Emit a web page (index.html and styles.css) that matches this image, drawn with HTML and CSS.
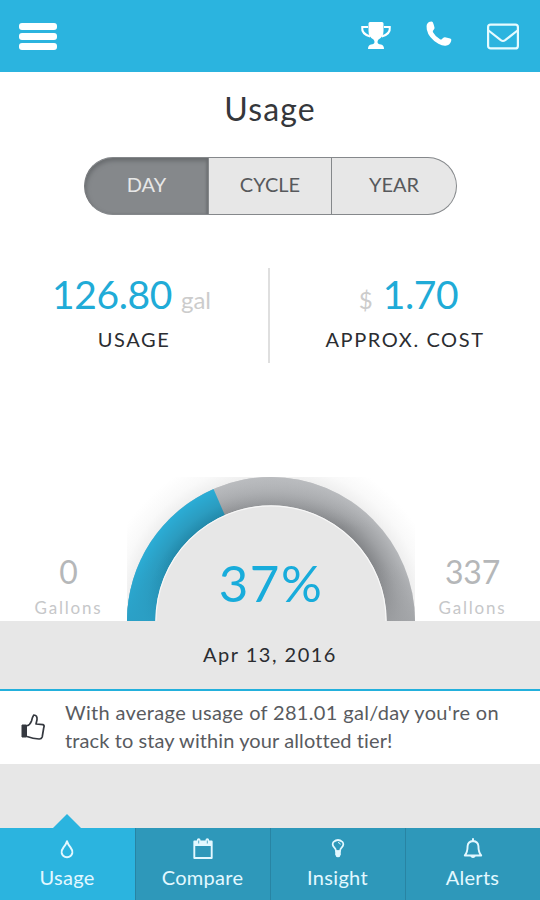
FILE: index.html
```html
<!DOCTYPE html>
<html lang="en">
<head>
    <meta charset="UTF-8">
    <meta name="viewport" content="width=device-width, initial-scale=1.0">
    <title>Usage</title>
    <link rel="stylesheet" href="styles.css">
</head>
<body>
    <header class="topbar">
        <div class="menu">
            <span></span>
            <span></span>
            <span></span>
        </div>
        <div class="actions">
            <svg class="trophy" width="32" height="29" viewBox="0 0 32 29">
                <path d="M8 6H2.200q-.8 7 8 9.500M24 6h5.800q.8 7-8 9.500" fill="none" stroke="#fff" stroke-width="2"/>
                <path d="M8.500 2.500Q8.500 1 10 1h12q1.500 0 1.500 1.500V10q0 6-5 8.500-1 1-1 2.500 0 2 3.500 2.500 3 .5 3 4.500H8q0-4 3-4.500 3.500-.5 3.500-2.500 0-1.500-1-2.500-5-2.500-5-8.500z" fill="#fff"/>
            </svg>
            <svg class="phone" width="26" height="26" viewBox="0 0 26 26">
                <path d="M1 3Q2.500.6 5.500.6 6.800.6 7.500 3l1 3.600Q8.800 8 7.500 9 6.300 10 7 11.200q2.800 4.900 7 7.100 1.200.6 2-.4 1.400-1.800 3-1.600l5.200 1.300q1.600.5 1 2.300-1.500 4.300-5.600 4.900-3.200.3-7.200-2Q2.500 17 .8 8.500.1 5 1 3z" fill="#fff"/>
            </svg>
            <svg class="mail" width="32" height="27" viewBox="0 0 32 27">
                <g fill="none" stroke="#e6fbff" stroke-width="2.200" stroke-linejoin="round">
                    <rect x="1.100" y="1.600" width="29.800" height="23.800" rx="2.500"/>
                    <path d="M1.500 7.500l12.300 9.700q2.200 1.600 4.400 0l12.300-9.700"/>
                </g>
            </svg>
        </div>
    </header>

    <main>
        <h1>Usage</h1>

        <div class="period">
            <button class="active">DAY</button>
            <button>CYCLE</button>
            <button>YEAR</button>
        </div>

        <section class="stats">
            <div class="stat">
                <p class="value"><b>126.80</b><span class="unit">gal</span></p>
                <p class="label">USAGE</p>
            </div>
            <div class="stat cost">
                <p class="value"><span class="currency">$</span><b>1.70</b></p>
                <p class="label">APPROX. COST</p>
            </div>
        </section>

        <section class="meter">
            <div class="limit">
                <p class="amount">0</p>
                <p class="gallons">Gallons</p>
            </div>
            <div class="gauge">
                <svg width="288" height="144" viewBox="0 0 288 144">
                    <defs>
                        <radialGradient id="grey" gradientUnits="userSpaceOnUse" cx="144" cy="144" r="144">
                            <stop offset=".8" stop-color="#838588"/>
                            <stop offset=".9" stop-color="#a0a2a5"/>
                            <stop offset="1" stop-color="#b6b8bb"/>
                        </radialGradient>
                        <radialGradient id="blue" gradientUnits="userSpaceOnUse" cx="144" cy="144" r="144">
                            <stop offset=".8" stop-color="#2389aa"/>
                            <stop offset=".88" stop-color="#2b9cc0"/>
                            <stop offset="1" stop-color="#2badd6"/>
                        </radialGradient>
                        <linearGradient id="light" x1="0" y1="0" x2="0" y2="1">
                            <stop offset="0" stop-color="#bcbec1" stop-opacity=".7"/>
                            <stop offset=".35" stop-color="#bcbec1" stop-opacity="0"/>
                            <stop offset=".6" stop-color="#a0a2a5" stop-opacity="0"/>
                            <stop offset="1" stop-color="#a0a2a5" stop-opacity=".8"/>
                        </linearGradient>
                        <linearGradient id="base" x1="0" y1="0" x2="0" y2="1">
                            <stop offset=".5" stop-color="#2b9fc5" stop-opacity="0"/>
                            <stop offset="1" stop-color="#2b9fc5" stop-opacity=".9"/>
                        </linearGradient>
                        <radialGradient id="halo" gradientUnits="userSpaceOnUse" cx="144" cy="144" r="174">
                            <stop offset=".82" stop-color="#eeeeee"/>
                            <stop offset=".9" stop-color="#f9f9f9"/>
                            <stop offset="1" stop-color="#fff"/>
                        </radialGradient>
                    </defs>
                    <rect width="288" height="144" fill="url(#halo)"/>
                    <path d="M0 144A144 144 0 0 1 288 144z" fill="url(#grey)"/>
                    <path d="M0 144A144 144 0 0 1 288 144z" fill="url(#light)"/>
                    <path d="M0 144A144 144 0 0 1 86.500 12L144 144z" fill="url(#blue)"/>
                    <path d="M0 144A144 144 0 0 1 86.500 12L144 144z" fill="url(#base)"/>
                    <path d="M28.500 144a115.500 115.500 0 0 1 231 0z" fill="#e7e7e7"/>
                    <path d="M28.900 144a115.100 115.100 0 0 1 230.200 0" fill="none" stroke="#f8f8f8" stroke-width="1.200"/>
                </svg>
                <p class="percent">37%</p>
            </div>
            <div class="limit max">
                <p class="amount">337</p>
                <p class="gallons">Gallons</p>
            </div>
        </section>

        <p class="date">Apr 13, 2016</p>

        <section class="notice">
            <svg width="26" height="28" viewBox="0 0 26 28">
                <path d="M2 12h4.500v12H2z" fill="#34383f" stroke="#34383f" stroke-linejoin="round"/>
                <path d="M7 12.800Q10 12 11.500 8q.7-3.800 2.300-6 3.700.2 3.200 4.800l-1 4.200 7 .6q1.800.8.700 3.400L22.200 24q-.8 2.200-3.200 2-6-.3-12-2.500" fill="none" stroke="#34383f" stroke-width="1.700" stroke-linejoin="round"/>
            </svg>
            <p><span class="first">With average usage of 281.01 gal/day you're on</span><br><span class="second">track to stay within your allotted tier!</span></p>
        </section>
    </main>

    <nav class="tabs">
        <a class="tab current">
            <svg width="24" height="24" viewBox="0 0 24 24">
                <path d="M12 4.200q1 3.300 3.500 6.200 2.300 3 1.800 5.600-.9 4-5.300 4.200-4.400-.2-5.300-4.200-.5-2.600 1.800-5.600Q11 7.500 12 4.200z" fill="none" stroke="#e3f8ff" stroke-width="2" stroke-linejoin="round"/>
            </svg>
            <span>Usage</span>
        </a>
        <a class="tab compare">
            <svg width="24" height="24" viewBox="0 0 24 24">
                <path d="M3 4h18v5H3z" fill="#e3f8ff"/>
                <path d="M3.300 4.500h17.400v16.500H3.300z" fill="none" stroke="#e3f8ff" stroke-width="1.900" stroke-linejoin="round"/>
                <path d="M7.700 3v3M16.300 3v3" stroke="#e3f8ff" stroke-width="3.600" stroke-linecap="round"/>
                <path d="M7.700 3.500v3M16.300 3.500v3" stroke="#2e98ba" stroke-width=".8"/>
            </svg>
            <span>Compare</span>
        </a>
        <a class="tab insight">
            <svg width="24" height="24" viewBox="0 0 24 24">
                <path d="M10 14q-.2-1.800-1.600-3.300Q5.400 7.500 7.600 4.800q4.400-3.600 8.800 0 2.200 2.700-.8 5.900Q14.200 12.200 14 14z" fill="none" stroke="#e3f8ff" stroke-width="1.700"/>
                <path d="M9.200 13.500h5.600v4q-.5 2.700-2.800 2.700t-2.800-2.700z" fill="#e3f8ff"/>
                <path d="M12 5.500q2 .1 2.300 2" fill="none" stroke="#e3f8ff"/>
            </svg>
            <span>Insight</span>
        </a>
        <a class="tab alerts">
            <svg width="24" height="24" viewBox="0 0 24 24">
                <path d="M3.800 18.500Q6.600 15.300 6.600 9q.4-4.600 5.400-5 5 .4 5.400 5 0 6.300 2.800 9.500z" fill="none" stroke="#e3f8ff" stroke-width="1.900" stroke-linejoin="round"/>
                <path d="M12 2v2" stroke="#e3f8ff" stroke-width="2" stroke-linecap="round"/>
                <path d="M9.200 18h5.600q-.4 3-2.800 3t-2.800-3z" fill="#e3f8ff"/>
            </svg>
            <span>Alerts</span>
        </a>
    </nav>
</body>
</html>
```
FILE: styles.css
```css
* {
    box-sizing: border-box;
}

body {
    display: flex;
    flex-direction: column;
    margin: 0;
    width: 540px;
    height: 900px;
    font-family: Lato, "Liberation Sans", sans-serif;
    font-variant-ligatures: none;
    background-color: #e7e7e7;
    white-space: nowrap;
}

p, h1 {
    margin: 0;
}

svg {
    display: block;
    flex: none;
}

.topbar {
    display: flex;
    justify-content: space-between;
    height: 72px;
    padding: 21px 21px 0 19px;
    background-color: #2bb4df;
}

.menu {
    display: flex;
    flex-direction: column;
    gap: 3px;
    padding-top: 2px;
}

.menu span {
    width: 38px;
    height: 7px;
    border-radius: 3px;
    background-color: #fff;
}

.actions {
    display: flex;
    align-items: flex-start;
}

.trophy {
    margin-left: -1px;
}

.phone {
    margin: 0 35px 0 34px;
}

.mail {
    margin-top: 2px;
}

main {
    flex: 1;
}

h1 {
    height: 85px;
    padding-top: 17px;
    background-color: #fff;
    text-align: center;
    font-size: 32px;
    line-height: 40px;
    font-weight: 400;
    letter-spacing: 1.1px;
    color: #35373b;
}

.period {
    display: flex;
    height: 58px;
    padding: 0 83px 0 84px;
    background-color: #fff;
}

.period button {
    width: 125px;
    padding: 0 0 3px;
    border: 1px solid #85888b;
    border-left: 0;
    background-color: #e7e7e7;
    font: 20px/53px Lato, "Liberation Sans", sans-serif;
    color: #57595c;
}

.period button:nth-child(2) {
    width: 123px;
}

.period button:last-child {
    border-radius: 0 29px 29px 0;
}

.period .active {
    border-left: 1px solid #77797c;
    border-radius: 29px 0 0 29px;
    background-color: #85888b;
    color: #e7e7e7;
    box-shadow: inset 1px 3px 4px #696c6f, inset -2px 0 2px #737679;
}

.stats {
    display: flex;
    height: 262px;
    padding-top: 53px;
    background-color: #fff;
}

.stat {
    width: 270px;
    height: 95px;
    border-right: 2px solid #dfdfdf;
    text-align: center;
}

.cost {
    border-right: 0;
}

.value {
    height: 54px;
    padding: 0 5px 0 0;
    font-size: 40px;
    line-height: 52px;
    color: #20abd7;
}

.value b {
    font-size: 39px;
    font-weight: 400;
    letter-spacing: -.4px;
}

.unit, .currency {
    font-size: 24px;
    color: #ccc;
}

.unit {
    margin-left: 9px;
}

.cost .value {
    padding: 0 0 0 7px;
}

.currency {
    margin-right: 10px;
}

.label {
    font-size: 20px;
    line-height: 34px;
    letter-spacing: 1.6px;
    color: #2b2d31;
}

.meter {
    display: flex;
    height: 144px;
    background-color: #fff;
}

.limit {
    width: 127px;
    padding: 76px 0 0 10px;
    text-align: center;
    color: #b5b7b9;
}

.max {
    width: 125px;
    padding-left: 0;
    padding-right: 10px;
}

.amount {
    font-size: 32px;
    line-height: 38px;
    font-weight: 400;
    letter-spacing: -.3px;
}

.gallons {
    font-size: 17px;
    line-height: 34px;
    letter-spacing: 1.8px;
    color: #c6c7c9;
}

.gauge {
    position: relative;
    width: 288px;
}

.percent {
    position: absolute;
    top: 76px;
    left: 0;
    width: 288px;
    text-align: center;
    font-size: 51px;
    line-height: 60px;
    letter-spacing: 1.5px;
    color: #18acdb;
}

.date {
    height: 68px;
    text-align: center;
    font-size: 20px;
    line-height: 67px;
    letter-spacing: 1.5px;
    color: #2b2d31;
}

.notice {
    display: flex;
    align-items: flex-start;
    height: 75px;
    padding: 7px 0 0 20px;
    border-top: 2px solid #23b0dc;
    background-color: #fff;
    font-size: 20px;
    line-height: 28px;
    color: #595b5f;
}

.notice svg {
    margin: 15px 19px 0 0;
}

.first {
    letter-spacing: .33px;
}

.second {
    letter-spacing: .1px;
}

.tabs {
    display: flex;
    height: 72px;
    background-color: #2e98ba;
}

.tab {
    display: flex;
    flex-direction: column;
    align-items: center;
    width: 135px;
    padding: 9px 1px 0 0;
    border-left: 1px solid #2884a3;
    font-size: 20px;
    line-height: 28px;
    letter-spacing: .3px;
    color: #e3f8ff;
}

.tab span {
    margin-top: 2px;
}

.current {
    position: relative;
    border-left: 0;
    background-color: #2bb4df;
}

/* pointer above the open tab */
.current::before {
    content: "";
    position: absolute;
    top: -14px;
    left: 53px;
    border: 14px solid transparent;
    border-top: 0;
    border-bottom-color: #2bb4df;
}
```
